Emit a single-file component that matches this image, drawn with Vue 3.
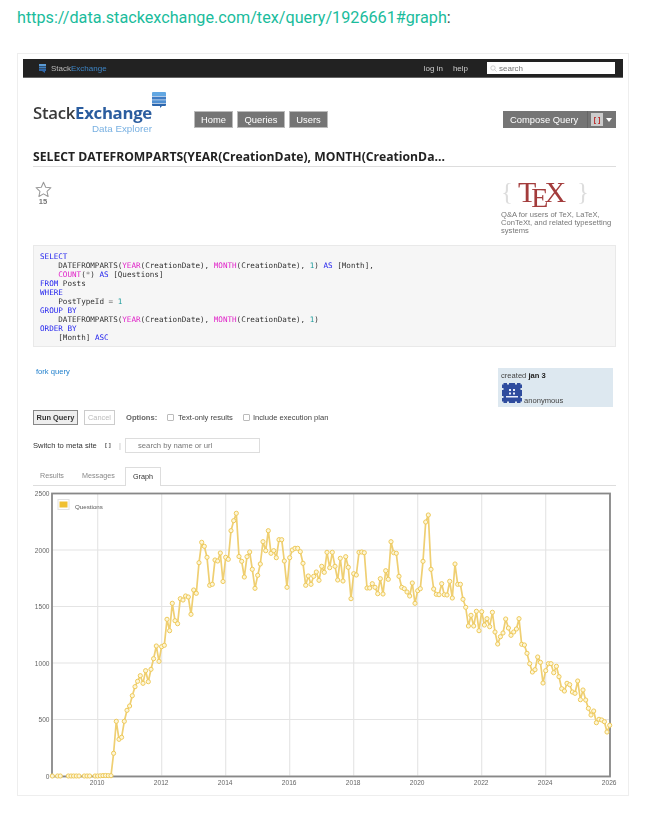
<script setup>
const ys = [776,776,776,776,776,776,776,776,776,776,776,776,776,776,776,776,776,776,775.8,775.6,775.5,775.6,775.7,
753.3,721.3,739.3,737.3,721.3,710.3,706,695.7,686.7,681.3,675.7,683.3,670.7,681.7,669.3,658.7,646,661.3,646.7,645.3,
619.3,630.7,603.3,620.7,623.7,598.7,600,596,597,614.3,590,593.3,562.7,542.3,546.3,557.3,585.3,584.3,560,561,553,581.5,557.3,559.3,530.7,520.7,513.3,556.5,
561.3,577,556.7,552,569.3,588.3,575.3,564,541.7,550.7,530.7,553.3,550.7,557.7,539.7,539.7,561,587.3,557.7,550,548.3,548.3,551.7,563.3,585.3,576,584.3,576.3,572,580.3,566.3,572.3,552.3,567.7,552.3,566.3,580,558.3,581,556.7,567.3,598.7,573.7,575,552.3,552,552.7,588,588,583.7,587.3,593.7,578.7,594,570.7,579.3,541.7,552.7,553.3,576.3,587.3,588.7,592,596,583,603.3,590.7,588.7,561.3,522,515,569.3,589,594.3,594.7,
583.7,594.7,595,581.3,598,564,584.3,584.3,599.3,607.3,626,615.3,626,611.3,630.7,611.7,625,618.7,626.7,612.3,632,644,636.7,633,619,628,635.3,632,629,618.7,644.3,645,653.3,
663.7,672,669.7,657,662.3,683,670.7,663.7,663.7,672.7,666.3,676.7,688.7,691,683.3,684.7,692,693.3,681,699.7,690,700,708.3,715,711,722.7,719.3,720,721.7,732,725.3]
const gaps = new Set([1, 4, 5, 11, 15])
const top = 486
const px = (i) => +(52.3 + 2.667 * i).toFixed(1)
const py = (y) => +(y - top).toFixed(1)
const points = ys.map((y, i) => ({ i, x: px(i), y: py(y) })).filter((p) => !gaps.has(p.i))
const segments = []
let cur = []
points.forEach((p, n) => {
  if (n && p.i !== points[n - 1].i + 1) { segments.push(cur); cur = [] }
  cur.push(`${p.x},${p.y}`)
})
segments.push(cur)
const lines = segments.map((s) => s.join(' '))
const yGrid = [
  { label: '2500', y: 7.5 }, { label: '2000', y: 64 }, { label: '1500', y: 120.5 },
  { label: '1000', y: 177 }, { label: '500', y: 233.5 }, { label: '0', y: 290 }
]
const xGrid = [2010, 2012, 2014, 2016, 2018, 2020, 2022, 2024, 2026].map((yr, n) => ({ label: yr, x: 97.7 + 64 * n }))
</script>

<template>
  <div class="page">
    <p class="url"><a class="url-link">https://data.stackexchange.com/tex/query/1926661#graph</a>:</p>
    <div class="card">
      <div class="shot">
        <div class="topbar">
          <div class="brand">
            <svg class="brand-icon" width="7" height="9" viewBox="0 0 7 9">
              <rect width="7" height="2" y="0" fill="#5b9bd5" />
              <rect width="7" height="2" y="2.5" fill="#3f7fc0" />
              <rect width="7" height="2" y="5" fill="#2f66a8" />
              <path d="M3 7h3v2z" fill="#2f66a8" />
            </svg>
            <span class="brand-a">Stack</span><span class="brand-b">Exchange</span>
          </div>
          <div class="top-right">
            <span class="top-link first">log in</span>
            <span class="top-link second">help</span>
            <div class="top-search">
              <svg width="7" height="7" viewBox="0 0 7 7"><circle cx="3" cy="3" r="2.2" fill="none" stroke="#bbb" stroke-width=".7" /><path d="M4.6 4.6L6.6 6.6" stroke="#bbb" stroke-width=".7" /></svg>
              <span>search</span>
            </div>
          </div>
        </div>

        <div class="body">
          <div class="header">
            <div class="logo">
              <div class="logo-word"><span class="stack">Stack</span><span class="exch">Exchange</span></div>
              <div class="logo-sub">Data Explorer</div>
              <svg class="logo-icon" width="14" height="16" viewBox="0 0 14 16">
                <path d="M1 0h12a1 1 0 0 1 1 1v3H0V1a1 1 0 0 1 1-1z" fill="#62a7e2" />
                <rect y="4.6" width="14" height="3" fill="#3f7cc4" />
                <rect y="8.2" width="14" height="3" fill="#4f8fd2" />
                <path d="M0 11.8h14V13a1 1 0 0 1-1 1H10l-2 2v-2H1a1 1 0 0 1-1-1z" fill="#2b66ad" />
              </svg>
            </div>
            <nav class="nav">
              <span class="nav-btn home">Home</span>
              <span class="nav-btn queries">Queries</span>
              <span class="nav-btn users">Users</span>
            </nav>
            <div class="compose">
              <span class="compose-main">Compose Query</span>
              <span class="compose-side">
                <span class="side-box">[ ]</span>
                <span class="caret"></span>
              </span>
            </div>
          </div>

          <h1 class="title">SELECT DATEFROMPARTS(YEAR(CreationDate), MONTH(CreationDa...</h1>

          <div class="info">
            <div class="fav">
              <svg width="17" height="17" viewBox="0 0 24 24"><path d="M12 1.8l3.1 6.9 7.4.8-5.5 5 1.5 7.4-6.5-3.7-6.5 3.7 1.5-7.4-5.5-5 7.4-.8z" fill="#fff" stroke="#9a9a9a" stroke-width="1.5" stroke-linejoin="round" /></svg>
              <span class="fav-count">15</span>
            </div>
            <div class="site">
              <div class="tex"><span class="brace">{</span><span class="t">T</span><span class="e">E</span><span class="x">X</span><span class="brace right">}</span></div>
              <p class="site-text">Q&amp;A for users of TeX, LaTeX, ConTeXt, and related typesetting systems</p>
            </div>
          </div>

          <pre class="code"><span class="kw">SELECT</span>
    DATEFROMPARTS(<span class="fn">YEAR</span>(CreationDate), <span class="fn">MONTH</span>(CreationDate), <span class="num">1</span>) <span class="kw">AS</span> [Month],
    <span class="fn">COUNT</span>(<span class="op">*</span>) <span class="kw">AS</span> [Questions]
<span class="kw">FROM</span> Posts
<span class="kw">WHERE</span>
    PostTypeId <span class="op">=</span> <span class="num">1</span>
<span class="kw">GROUP BY</span>
    DATEFROMPARTS(<span class="fn">YEAR</span>(CreationDate), <span class="fn">MONTH</span>(CreationDate), <span class="num">1</span>)
<span class="kw">ORDER BY</span>
    [Month] <span class="kw">ASC</span></pre>

          <div class="meta">
            <a class="fork">fork query</a>
            <div class="created">
              <div>created <b>jan 3</b></div>
              <div class="user">
                <svg width="20" height="20" viewBox="0 0 20 20">
                  <rect width="20" height="20" fill="#2f4c9e" />
                  <path d="M0 0h1.5v1.5H0zM5 0h2v1.5H5zM13 0h2v1.5h-2zM18.5 0H20v1.5h-1.5zM0 5h1.5v2H0zM18.5 5H20v2h-1.5zM0 13h1.5v2H0zM18.5 13H20v2h-1.5zM0 18.5h1.5V20H0zM5 18.5h2V20H5zM13 18.5h2V20h-2zM18.5 18.5H20V20h-1.5z" fill="#dde8f0" />
                  <path d="M7 6h2v2H7zM11 6h2v2h-2zM7 9.5h2v2H7zM11 9.5h2v2h-2zM4 13h12v1.5H4z" fill="#e9eefb" />
                </svg>
                <span class="user-name">anonymous</span>
              </div>
            </div>
          </div>

          <div class="run-row">
            <button class="run">Run Query</button>
            <button class="cancel">Cancel</button>
            <span class="opt-label">Options:</span>
            <span class="check first-check"></span><span class="check-text">Text-only results</span>
            <span class="check second-check"></span><span class="check-text">Include execution plan</span>
          </div>

          <div class="switch-row">
            <span class="switch-label">Switch to meta site</span>
            <span class="switch-icon">[ ]</span>
            <span class="switch-sep">|</span>
            <div class="switch-input">search by name or url</div>
          </div>

          <div class="tabs">
            <span class="tab results">Results</span>
            <span class="tab messages">Messages</span>
            <span class="tab active">Graph</span>
          </div>
        </div>

        <svg class="chart" width="600" height="304" viewBox="23 0 600 304">
          <g class="grid">
            <line v-for="g in yGrid" :key="g.label" x1="52" x2="610" :y1="g.y" :y2="g.y" />
            <line v-for="g in xGrid" :key="g.label" :x1="g.x" :x2="g.x" y1="7.5" y2="290" />
          </g>
          <g class="labels">
            <text v-for="g in yGrid" :key="g.label" x="49.5" :y="g.y + 2.5" text-anchor="end">{{ g.label }}</text>
            <text v-for="g in xGrid" :key="g.label" :x="g.x - 0.5" y="298.5" text-anchor="middle">{{ g.label }}</text>
          </g>
          <rect class="frame" x="52" y="7.5" width="558" height="283" />
          <polyline v-for="(l, n) in lines" :key="n" class="series" :points="l" />
          <circle v-for="p in points" :key="p.i" class="dot" :cx="p.x" :cy="p.y" r="2.1" />
          <rect x="58" y="13.5" width="11" height="10" fill="#fff" stroke="#e2e2e2" stroke-width="1" />
          <rect x="59.5" y="15.5" width="8" height="6" fill="#f0c030" />
          <text class="legend" x="75" y="22.5">Questions</text>
        </svg>
      </div>
    </div>
  </div>
</template>

<style scoped>
.page {
  width: 647px;
  height: 813px;
  overflow: hidden;
  background: #fff;
  font-family: "Liberation Sans", Arial, sans-serif;
  color: #333;
}
.url {
  margin: 0;
  padding: 8px 0 0 17px;
  height: 53px;
  box-sizing: border-box;
  font: 400 16.2px/20px Roboto, sans-serif;
  color: #444;
}
.url-link { color: #1abc9c; }
.card {
  margin-left: 17px;
  width: 612px;
  height: 743px;
  box-sizing: border-box;
  border: 1px solid #eee;
  padding: 5px;
}
.shot { filter: blur(0.45px); }
.topbar {
  height: 19px;
  box-sizing: border-box;
  background: #222;
  border-bottom: 1px solid #666;
  display: flex;
  justify-content: space-between;
  align-items: center;
  font-size: 8px;
  color: #ccc;
}
.brand { display: flex; align-items: center; padding-left: 16px; }
.brand-icon { margin-right: 5px; }
.brand-a { color: #bbb; }
.brand-b { color: #3d85c6; }
.top-right { display: flex; align-items: center; padding-right: 8px; }
.top-link.first { margin-right: 10px; }
.top-link.second { margin-right: 19px; }
.top-search {
  width: 128px;
  height: 12px;
  box-sizing: border-box;
  background: #fff;
  display: flex;
  align-items: center;
  gap: 2px;
  padding-left: 3px;
  color: #777;
}
.body { padding: 0 7px 0 10px; }
.header {
  height: 55px;
  display: flex;
  align-items: flex-end;
  padding-bottom: 5px;
  box-sizing: border-box;
}
.logo { width: 161px; height: 41px; position: relative; margin-bottom: -11px; }
.logo-word {
  font: 700 16.8px/20px "Open Sans", sans-serif;
  letter-spacing: -0.3px;
  padding-top: 5px;
}
.stack { color: #3a3a3a; font-weight: 600; }
.exch { color: #2b5d9f; }
.logo-sub {
  font-size: 9.8px;
  line-height: 10px;
  color: #79b1e2;
  padding-left: 59px;
  margin-top: 1px;
}
.logo-icon { position: absolute; left: 119px; top: -6px; }
.nav { display: flex; gap: 4px; }
.nav-btn {
  height: 17px;
  box-sizing: border-box;
  background: #757575;
  border: 1px solid #bbb;
  color: #fff;
  font-size: 9.4px;
  line-height: 15px;
  text-align: center;
}
.home { width: 39px; }
.queries { width: 48px; }
.users { width: 39px; }
.compose {
  margin-left: auto;
  height: 17px;
  width: 113px;
  display: flex;
  background: #757575;
  color: #fff;
  font-size: 9.4px;
  line-height: 17px;
}
.compose-main { width: 84px; padding-left: 7px; box-sizing: border-box; }
.compose-side {
  flex: 1;
  border-left: 1px solid #666;
  display: flex;
  align-items: center;
  padding-left: 3px;
  gap: 3px;
}
.side-box {
  width: 12px;
  height: 13px;
  background: #ccc;
  color: #b22;
  font: 700 7px/13px "Liberation Sans", sans-serif;
  text-align: center;
}
.caret {
  width: 0;
  height: 0;
  border-left: 3.5px solid transparent;
  border-right: 3.5px solid transparent;
  border-top: 4px solid #fff;
}
.title {
  margin: 15px 0 0;
  height: 19px;
  box-sizing: border-box;
  border-bottom: 1px solid #ddd;
  font: 700 12.18px/18px "Open Sans", sans-serif;
  color: #222;
  white-space: nowrap;
}
.info { height: 78px; display: flex; justify-content: space-between; }
.fav { width: 20px; display: flex; flex-direction: column; align-items: center; padding-top: 14px; box-sizing: border-box; }
.fav-count { font: 700 7.6px/8px "Liberation Sans", sans-serif; color: #777; }
.site { width: 115px; padding-top: 9px; }
.tex {
  font-family: "Liberation Serif", serif;
  color: #a33c3c;
  font-size: 30px;
  line-height: 32px;
  height: 35px;
  white-space: nowrap;
}
.brace { color: #ddd; font-weight: 400; font-size: 25px; vertical-align: 2px; margin-right: 5px; }
.brace.right { margin: 0 0 0 11px; }
.e { font-size: 28px; vertical-align: -5px; margin: 0 -4px 0 -5px; }
.x { font-size: 30px; }
.site-text {
  margin: 0;
  font-size: 7.6px;
  line-height: 8px;
  color: #777;
}
.code {
  margin: 0;
  height: 102px;
  box-sizing: border-box;
  background: #f6f6f6;
  border: 1px solid #e9e9e9;
  padding: 6px 6px 0;
  font: 400 7.6px/9px "DejaVu Sans Mono", monospace;
  color: #333;
}
.kw { color: #2222ee; }
.fn { color: #e020c8; }
.num { color: #1a9a9a; }
.op { color: #888; }
.meta {
  margin-top: 21px;
  height: 39px;
  display: flex;
  justify-content: space-between;
  padding-right: 3px;
}
.fork { font-size: 7.6px; line-height: 8px; color: #1f7fcc; margin: 0 0 0 3px; }
.created {
  width: 115px;
  box-sizing: border-box;
  background: #dde8f0;
  padding: 3px 0 0 3px;
  font-size: 7.6px;
  line-height: 9px;
  color: #444;
}
.created b { color: #222; }
.user { display: flex; align-items: flex-end; gap: 2px; margin: 3px 0 0 1px; }
.user-name { margin-bottom: -1.5px; }
.run-row {
  margin-top: 3px;
  height: 15px;
  display: flex;
  align-items: center;
  font-size: 7.6px;
  color: #555;
}
.run-row button {
  height: 15px;
  padding: 0;
  font: 700 7.4px/13px "Liberation Sans", sans-serif;
  background: #eee;
}
.run { width: 45px; border: 1px solid #888; color: #333; }
.cancel { width: 31px; margin-left: 6px; border: 1px solid #ccc; color: #bbb; background: #fff !important; font-weight: 400 !important; }
.opt-label { margin-left: 11px; font-weight: 700; width: 41px; color: #666; }
.check { width: 7px; height: 7px; border: 1px solid #bbb; border-radius: 1px; box-sizing: border-box; margin-right: 4px; }
.check-text { color: #444; }
.first-check { margin-left: 0; }
.check-text + .second-check { margin-left: 10px; margin-right: 3px; }
.switch-row {
  margin-top: 13px;
  height: 15px;
  display: flex;
  align-items: center;
  font-size: 7.6px;
  color: #333;
}
.switch-label { width: 72px; }
.switch-icon { width: 14px; font-size: 6px; font-weight: 700; color: #555; margin-top: -2px; }
.switch-sep { width: 6px; color: #bbb; }
.switch-input {
  width: 135px;
  height: 15px;
  box-sizing: border-box;
  border: 1px solid #ddd;
  padding-left: 12px;
  line-height: 13px;
  font-size: 7.7px;
  color: #777;
}
.tabs {
  margin-top: 14px;
  height: 19px;
  box-sizing: border-box;
  border-bottom: 1px solid #ddd;
  display: flex;
  font-size: 7.2px;
  color: #888;
}
.tab { line-height: 17px; }
.results { margin-left: 7px; width: 42px; }
.messages { width: 43px; }
.active {
  width: 36px;
  height: 19px;
  box-sizing: border-box;
  text-align: center;
  background: #fff;
  border: 1px solid #ddd;
  border-bottom: 0;
  color: #333;
}
.chart { display: block; }
.grid line { stroke: #e4e4e4; stroke-width: 1.1; }
.labels text { font: 400 6.6px "Liberation Sans", sans-serif; fill: #666; }
.frame { fill: none; stroke: #888; stroke-width: 1.8; }
.series { fill: none; stroke: #efcf72; stroke-width: 1.7; stroke-linejoin: round; }
.dot { fill: #fdf6d8; stroke: #eec95a; stroke-width: 1; }
.legend { font: 400 6.2px "Liberation Sans", sans-serif; fill: #555; }
</style>

<style>
html, body { margin: 0; background: #fff; }
</style>
